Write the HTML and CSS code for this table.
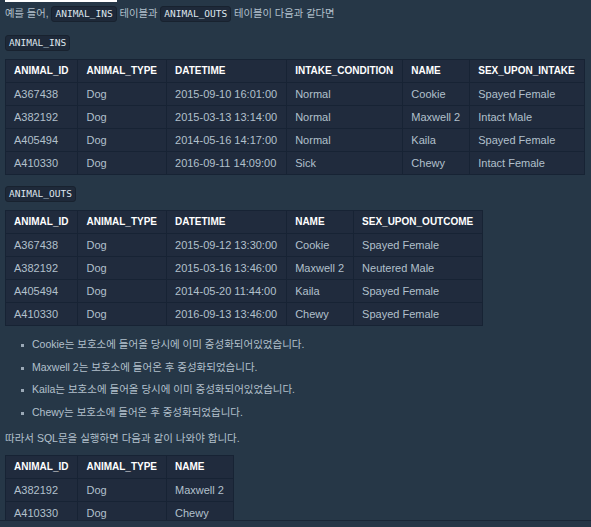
FILE: index.html
```html
<!DOCTYPE html>
<html lang="ko">
<head>
<meta charset="utf-8">
<link rel="stylesheet" href="styles.css">
</head>
<body>
<div class="page">
  <div class="content">
    <div class="topbar"></div>
    <p class="intro">예를 들어, <code>ANIMAL_INS</code> 테이블과 <code>ANIMAL_OUTS</code> 테이블이 다음과 같다면</p>
    <p class="label"><code>ANIMAL_INS</code></p>
    <table class="tbl">
      <thead><tr><th>ANIMAL_ID</th><th>ANIMAL_TYPE</th><th>DATETIME</th><th>INTAKE_CONDITION</th><th>NAME</th><th>SEX_UPON_INTAKE</th></tr></thead>
      <tbody>
        <tr><td>A367438</td><td>Dog</td><td>2015-09-10 16:01:00</td><td>Normal</td><td>Cookie</td><td>Spayed Female</td></tr>
        <tr><td>A382192</td><td>Dog</td><td>2015-03-13 13:14:00</td><td>Normal</td><td>Maxwell 2</td><td>Intact Male</td></tr>
        <tr><td>A405494</td><td>Dog</td><td>2014-05-16 14:17:00</td><td>Normal</td><td>Kaila</td><td>Spayed Female</td></tr>
        <tr><td>A410330</td><td>Dog</td><td>2016-09-11 14:09:00</td><td>Sick</td><td>Chewy</td><td>Intact Female</td></tr>
      </tbody>
    </table>
    <p class="label"><code>ANIMAL_OUTS</code></p>
    <table class="tbl">
      <thead><tr><th>ANIMAL_ID</th><th>ANIMAL_TYPE</th><th>DATETIME</th><th>NAME</th><th>SEX_UPON_OUTCOME</th></tr></thead>
      <tbody>
        <tr><td>A367438</td><td>Dog</td><td>2015-09-12 13:30:00</td><td>Cookie</td><td>Spayed Female</td></tr>
        <tr><td>A382192</td><td>Dog</td><td>2015-03-16 13:46:00</td><td>Maxwell 2</td><td>Neutered Male</td></tr>
        <tr><td>A405494</td><td>Dog</td><td>2014-05-20 11:44:00</td><td>Kaila</td><td>Spayed Female</td></tr>
        <tr><td>A410330</td><td>Dog</td><td>2016-09-13 13:46:00</td><td>Chewy</td><td>Spayed Female</td></tr>
      </tbody>
    </table>
    <ul class="notes">
      <li>Cookie는 보호소에 들어올 당시에 이미 중성화되어있었습니다.</li>
      <li>Maxwell 2는 보호소에 들어온 후 중성화되었습니다.</li>
      <li>Kaila는 보호소에 들어올 당시에 이미 중성화되어있었습니다.</li>
      <li>Chewy는 보호소에 들어온 후 중성화되었습니다.</li>
    </ul>
    <p class="result">따라서 SQL문을 실행하면 다음과 같이 나와야 합니다.</p>
    <table class="tbl">
      <thead><tr><th>ANIMAL_ID</th><th>ANIMAL_TYPE</th><th>NAME</th></tr></thead>
      <tbody>
        <tr><td>A382192</td><td>Dog</td><td>Maxwell 2</td></tr>
        <tr><td>A410330</td><td>Dog</td><td>Chewy</td></tr>
      </tbody>
    </table>
  </div>
  <div class="footer"></div>
</div>
</body>
</html>
```
FILE: styles.css
```css
html, body {
  margin: 0;
  padding: 0;
  background: #263747;
}
body {
  font-family: "Liberation Sans", "Noto Sans CJK KR", sans-serif;
  font-size: 10.5px;
  color: #b2c0cc;
}
.page {
  width: 591px;
  height: 527px;
  overflow: hidden;
}
.content {
  height: 521px;
  overflow: hidden;
  padding: 0 5px;
  border-bottom: 1px solid #1a2636;
  box-sizing: border-box;
}
.footer {
  height: 5px;
  background: #263647;
}
.topbar {
  width: 112px;
  height: 2px;
  background: #ffffff;
}
p {
  margin: 0;
}
code {
  font-family: "DejaVu Sans Mono", monospace;
  font-size: 9.5px;
  line-height: 12px;
  display: inline-block;
  padding: 1px 3px;
  color: #dfe6ee;
  background: #1e2939;
  border: 1px solid #18222f;
  border-radius: 3px;
  vertical-align: middle;
}
.intro {
  margin-top: 2px;
  line-height: 19px;
  font-size: 10.3px;
}
.label {
  margin-top: 10.5px;
  line-height: 17px;
}
.tbl {
  border-collapse: collapse;
  background: #202b3d;
  margin-top: 8px;
}
.tbl th, .tbl td {
  border: 1px solid #172334;
  padding: 5px 9px 5px 8px;
  line-height: 12px;
  text-align: left;
  white-space: nowrap;
}
.tbl th {
  font-size: 10px;
  font-weight: 700;
  color: #ffffff;
}
.tbl td {
  font-size: 11px;
  color: #b2c0cc;
}
.notes {
  list-style: none;
  margin: 11px 0 0;
  padding: 0 0 0 27px;
}
.notes li {
  line-height: 15px;
  margin-bottom: 7.5px;
}
.notes li::before {
  content: "";
  display: inline-block;
  width: 3px;
  height: 3px;
  background: #9aa8b6;
  margin-left: -11px;
  margin-right: 8px;
  vertical-align: middle;
}
.result {
  margin-top: 11.5px;
  line-height: 15px;
}
.result + .tbl {
  margin-top: 9px;
}
```
